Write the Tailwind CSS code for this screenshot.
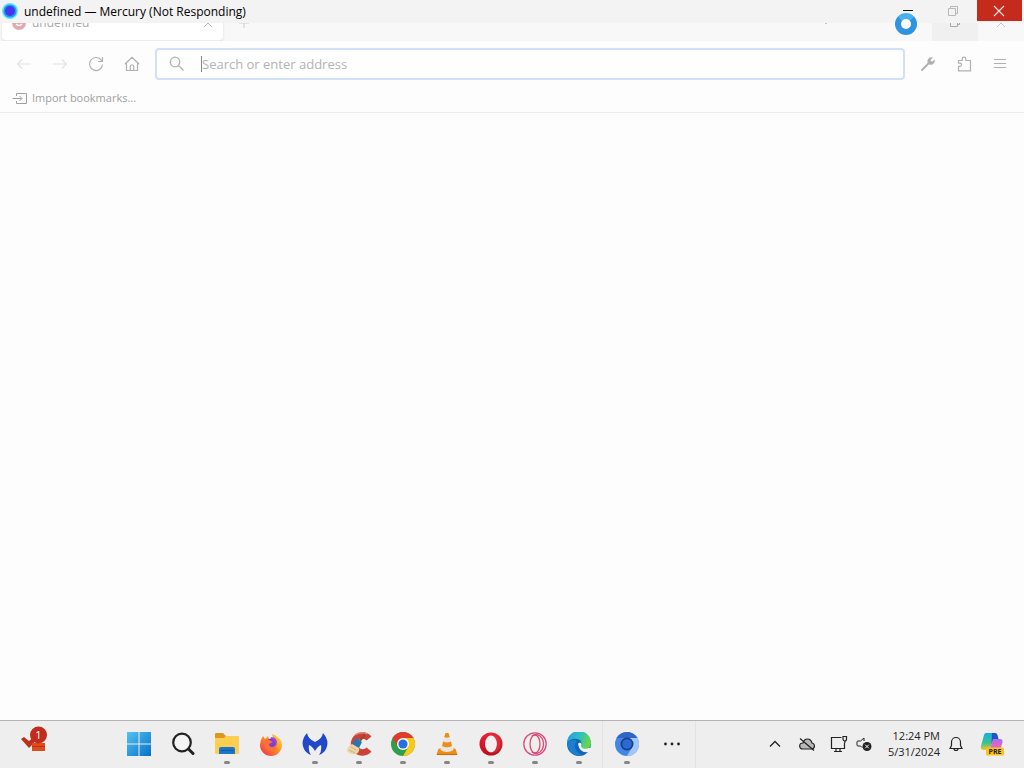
<!DOCTYPE html>
<html lang="en">
<head>
    <meta charset="UTF-8">
    <meta name="viewport" content="width=device-width, initial-scale=1.0">
    <title>undefined — Mercury (Not Responding)</title>
    <script src="https://cdn.jsdelivr.net/npm/@tailwindcss/browser@4"></script>
</head>
<body class="relative flex h-screen flex-col overflow-hidden bg-[#fdfdfd] font-['Open_Sans','Noto_Sans',sans-serif] text-xs text-black">

    <!-- Title bar -->
    <header class="flex h-[23px] shrink-0 items-start justify-between bg-[#f3f3f3]">
        <div class="flex h-[23px] items-center gap-1 pl-0.5">
            <svg class="h-[18px] w-[18px]" viewBox="0 0 18 18">
                <circle cx="8" cy="8" r="8" fill="#5fe8ee" />
                <circle cx="8" cy="8" r="6.6" fill="#1d9df2" />
                <circle cx="8" cy="8" r="5" fill="#4a35ee" />
            </svg>
            <h1 class="text-xs">undefined — Mercury (Not Responding)</h1>
        </div>
        <div class="flex pr-0.5">
            <button aria-label="Minimize" class="flex h-[21px] w-[45px] items-center justify-center pr-1">
                <svg class="h-3 w-3" viewBox="0 0 12 12"><path d="M1 5.500h10" stroke="#111" /></svg>
            </button>
            <button aria-label="Restore" class="flex h-[21px] w-[45px] items-center justify-center pr-1">
                <svg class="h-3 w-3" viewBox="0 0 12 12" fill="none" stroke="#b8b8b8"><path d="M1.500 3.500h7v7h-7zM3.500 3.500v-2h7v7h-2" /></svg>
            </button>
            <button aria-label="Close" class="flex h-[21px] w-[45px] items-center justify-center bg-[#c42b1c] pr-0.5">
                <svg class="h-3 w-3" viewBox="0 0 12 12"><path d="M1 1l10 10M11 1L1 11" stroke="#f6dedb" stroke-width="1.200" /></svg>
            </button>
        </div>
    </header>

    <!-- Tab strip, its upper half is hidden under the title bar -->
    <div class="flex h-[18px] shrink-0 items-end justify-between overflow-hidden bg-[#f8f8f8] text-[#a8a8a8]">
        <div class="flex h-9 items-center pl-0.5">
            <div class="flex h-9 w-[221px] items-center rounded-b border-b border-[#ececec] bg-white px-2.5 shadow-sm">
                <svg class="h-4 w-4" viewBox="0 0 16 16"><circle cx="7" cy="8" r="7" fill="#e4a9ad" /><path d="M4 9q3 3 6 0" stroke="#fff" stroke-width="1.500" fill="none" /></svg>
                <span class="ml-1 grow">undefined</span>
                <button aria-label="Close tab"><svg class="h-2.5 w-2.5" viewBox="0 0 10 10"><path d="M1 1l8 8M9 1L1 9" stroke="#b8b8b8" /></svg></button>
            </div>
            <button aria-label="New tab" class="ml-4"><svg class="h-2.5 w-2.5" viewBox="0 0 10 10"><path d="M0 5h10M5 0v10" stroke="#cccccc" /></svg></button>
        </div>
        <div class="flex h-9 items-center">
            <button aria-label="List all tabs" class="mr-[102px]"><svg class="h-2 w-2" viewBox="0 0 8 8"><path d="M1 2l3 3 3-3" fill="none" stroke="#c4c4c4" /></svg></button>
            <div class="flex h-9 w-[46px] items-center justify-center bg-[#f0f0f0]">
                <svg class="h-2.5 w-2.5" viewBox="0 0 10 10" fill="none" stroke="#a8a8a8"><path d="M.5 2.500h7v6h-7zM2.500 2.500v-2h7v6h-2" /></svg>
            </div>
            <div class="flex h-9 w-[46px] items-center justify-center">
                <svg class="h-2.5 w-2.5" viewBox="0 0 10 10"><path d="M1 1l8 8M9 1L1 9" stroke="#c4c4c4" /></svg>
            </div>
        </div>
    </div>

    <!-- Navigation toolbar -->
    <nav class="flex h-[46px] shrink-0 items-center pl-4">
        <div class="flex shrink-0 items-center gap-5 text-[#b0b0b0]">
            <button aria-label="Back" class="text-[#e2e2e2]"><svg class="h-4 w-4" viewBox="0 0 16 16" fill="none" stroke="currentColor" stroke-width="1.200"><path d="M15 8H1.500M6 3.500L1.500 8 6 12.500" /></svg></button>
            <button aria-label="Forward" class="text-[#e2e2e2]"><svg class="h-4 w-4" viewBox="0 0 16 16" fill="none" stroke="currentColor" stroke-width="1.200"><path d="M1 8h13.500M10 3.500L14.500 8 10 12.500" /></svg></button>
            <button aria-label="Reload"><svg class="h-4 w-4" viewBox="0 0 16 16" fill="none" stroke="currentColor" stroke-width="1.200"><path d="M14.500 8.500A6.500 6.500 0 1 1 12.800 3.600L14.500 5.500M14.500 1v4.500H10" /></svg></button>
            <button aria-label="Home"><svg class="h-4 w-4" viewBox="0 0 16 16" fill="none" stroke="currentColor" stroke-width="1.200"><path d="M1 8L8 1.400 15 8M2.500 6.700v7.800h11V6.700M6.300 14.500V10q0-1 1-1h1.400q1 0 1 1v4.500" /></svg></button>
        </div>
        <label class="ml-[15px] flex h-8 grow items-center rounded border-2 border-[#d2dffb] bg-white pl-3">
            <svg class="h-4 w-4 shrink-0" viewBox="0 0 16 16" fill="none" stroke="#b4b4b4" stroke-width="1.300"><circle cx="6" cy="6" r="4.800" /><path d="M9.500 9.500l5 5" /></svg>
            <span class="ml-4 h-4 w-px bg-[#888888]"></span>
            <input type="text" aria-label="Address" placeholder="Search or enter address" class="min-w-0 grow bg-transparent pt-px text-[13px] outline-none placeholder:text-[#b2b2b2]">
        </label>
        <div class="flex shrink-0 items-center gap-5 pr-4 pl-[15px] text-[#b0b0b0]">
            <button aria-label="Tools"><svg class="h-4 w-4" viewBox="0 0 16 16"><path d="M2 14l7-7" stroke="currentColor" stroke-width="2" stroke-linecap="round" /><path d="M12.800 1.600A4 4 0 0 0 7.500 6.500L9.500 8.500A4 4 0 0 0 14.600 3.400L12 5.800 10.400 4.200z" fill="currentColor" /></svg></button>
            <button aria-label="Extensions"><svg class="h-4 w-4" viewBox="0 0 16 16" fill="none" stroke="currentColor" stroke-width="1.200"><path d="M2.500 10.300V14.800H14.500V4.500H9.800V3A1.800 1.800 0 0 0 6.200 3V4.500H2.500V7.200H4A1.500 1.500 0 0 1 4 10.300z" /></svg></button>
            <button aria-label="Menu"><svg class="h-4 w-4" viewBox="0 0 16 16"><path d="M2 3.500h12M2 7.500h12M2 11.500h12" stroke="currentColor" /></svg></button>
        </div>
    </nav>

    <!-- Bookmarks toolbar -->
    <div class="flex h-[26px] shrink-0 items-center border-b border-[#ebebeb] pb-0.5 pl-3">
        <button class="flex items-center gap-1 text-[11px] text-[#a0a0a0]">
            <svg class="h-4 w-4" viewBox="0 0 16 16" fill="none" stroke="currentColor"><path d="M4.500 5V2.500h10v10h-10V10M.5 7.500h9M7.500 5l2.500 2.500L7.500 10" /></svg>
            <span>Import bookmarks...</span>
        </button>
    </div>

    <main class="grow"></main>

    <!-- Taskbar -->
    <footer class="flex h-12 shrink-0 items-stretch border-t border-[#b4b4b4] bg-[#eeeeee] text-[#222]">
        <div class="flex w-[117px] shrink-0 items-start pt-1 pl-5">
            <button aria-label="Widgets, 1 notification">
                <svg class="h-7 w-7" viewBox="0 0 28 28">
                    <path d="M1 14l3-2 5 4 5-4v6l-5 5z" fill="#b8321c" />
                    <path d="M12 18h13v8H12z" fill="#e04b1c" />
                    <path d="M12 21.500h13" stroke="#b8321c" />
                    <circle cx="18.500" cy="10" r="8.500" fill="#c42b1c" />
                    <text x="18.500" y="14" text-anchor="middle" font-size="11" fill="#fff">1</text>
                </svg>
            </button>
        </div>

        <div class="flex pb-0.5">
            <button aria-label="Start" class="flex w-11 items-center justify-center">
                <svg class="h-6 w-6" viewBox="0 0 24 24">
                    <defs><linearGradient id="win" gradientUnits="userSpaceOnUse" x1="0" y1="0" x2="24" y2="24"><stop stop-color="#54c3f2" /><stop offset="1" stop-color="#0670c8" /></linearGradient></defs>
                    <path d="M0 0h11.500v11.500H0zM12.500 0H24v11.500H12.500zM0 12.500h11.500V24H0zM12.500 12.500H24V24H12.500z" fill="url(#win)" />
                </svg>
            </button>
            <button aria-label="Search" class="flex w-11 items-center justify-center">
                <svg class="h-6 w-6" viewBox="0 0 24 24" fill="none" stroke="#222"><circle cx="11" cy="10.500" r="8.800" stroke-width="2.200" fill="#f4f4f4" /><path d="M17.500 17l4.500 4.500" stroke-width="3" stroke-linecap="round" /></svg>
            </button>
            <button aria-label="File Explorer" class="relative flex w-11 items-center justify-center">
                <svg class="h-6 w-[26px]" viewBox="0 0 26 24">
                    <path d="M1 2q0-1 1-1h7l3 3h12q1 0 1 1v8H1z" fill="#d8991c" />
                    <path d="M1 6h9l2-2h12q1 0 1 1v16q0 1-1 1H2q-1 0-1-1z" fill="#fccf50" />
                    <path d="M5 22v-5q0-2 2-2h12q2 0 2 2v5z" fill="#1b75c9" /><path d="M7 18.500h12" stroke="#125ba3" />
                </svg>
                <span class="absolute bottom-0.5 h-[3px] w-1.5 rounded-full bg-[#858585]"></span>
            </button>
            <button aria-label="Firefox" class="flex w-11 items-center justify-center">
                <svg class="h-6 w-6" viewBox="0 0 24 24">
                    <defs><linearGradient id="fox" x1="1" y1="0" x2="0" y2="1"><stop stop-color="#ffe24a" /><stop offset=".45" stop-color="#ff9025" /><stop offset="1" stop-color="#ef2355" /></linearGradient></defs>
                    <path d="M4 4l2 3 3-3 1 3 4-1-1-4q4 1 6 4l2 1q2 3 2 6a11 11 0 0 1-22 0q0-5 3-9z" fill="url(#fox)" />
                    <circle cx="12" cy="12" r="5.500" fill="#7541dc" />
                    <path d="M5 8q4-2 7 1l2 1-4 2q0 3 3 3 3 0 4-3 1 6-5 7-7-1-7-11z" fill="#ff7139" />
                    <path d="M12 6q5 0 5 5" fill="none" stroke="#a543d8" stroke-width="2" />
                </svg>
            </button>
            <button aria-label="Malwarebytes" class="relative flex w-11 items-center justify-center">
                <svg class="h-6 w-[26px]" viewBox="0 0 26 24">
                    <path d="M5 1q1 6 8 9 7-3 8-9 7 8 3 16-2 4-7 6 3-4 2-10-3 1-6 6-3-5-6-6-1 6 2 10-5-2-7-6Q-2 9 5 1z" fill="#2148c8" />
                </svg>
                <span class="absolute bottom-0.5 h-[3px] w-1.5 rounded-full bg-[#858585]"></span>
            </button>
            <button aria-label="CCleaner" class="relative flex w-11 items-center justify-center">
                <svg class="h-6 w-[26px]" viewBox="0 0 26 24">
                    <path d="M23 6.500A8.500 8.500 0 1 0 23 17.500" fill="none" stroke="#cd4136" stroke-width="6.500" />
                    <path d="M9 3q6-4 12-1" fill="none" stroke="#e88577" stroke-width="1.500" />
                    <path d="M19 2l-5 7" stroke="#8e4937" stroke-width="2" />
                    <path d="M10 6l6 4-3 6-7-4z" fill="#2878ae" />
                    <path d="M6 12l7 4q1 4-3 6-6 1-9-3 1-5 5-7z" fill="#ecd4a8" /><path d="M5 15l5 3M3 18l6 3" stroke="#d4af72" />
                </svg>
                <span class="absolute bottom-0.5 h-[3px] w-1.5 rounded-full bg-[#858585]"></span>
            </button>
            <button aria-label="Chrome" class="relative flex w-11 items-center justify-center">
                <svg class="h-6 w-6" viewBox="0 0 24 24">
                    <circle cx="12" cy="12" r="12" fill="#2c9f49" />
                    <path d="M1.600 6A12 12 0 0 1 22.400 6H12L6.800 15z" fill="#df3b2e" />
                    <path d="M12 6h10.400A12 12 0 0 1 12 24l5.200-9z" fill="#fcc81c" />
                    <circle cx="12" cy="12" r="6" fill="#fff" /><circle cx="12" cy="12" r="4.600" fill="#286fe0" />
                </svg>
                <span class="absolute bottom-0.5 h-[3px] w-1.5 rounded-full bg-[#858585]"></span>
            </button>
            <button aria-label="VLC" class="relative flex w-11 items-center justify-center">
                <svg class="h-6 w-6" viewBox="0 0 24 24">
                    <path d="M4.500 16.500h15q1 0 1.300 1L22.500 23h-21l1.700-5.500q.3-1 1.300-1z" fill="#f08c14" />
                    <path d="M11 1h2q.6 0 .8.700L18.500 18q-6.500 4-13 0L10.200 1.700Q10.400 1 11 1z" fill="#e8e6e3" />
                    <path d="M10.200 1.700Q10.400 1 11 1h2q.6 0 .8.700l.9 3.300q-2.700 1.500-5.400 0zM8.200 9.500q3.800 2 7.600 0l1.200 4.500q-5 2.500-10 0z" fill="#f08c14" />
                    <path d="M2 22.500h20" stroke="#cf6706" />
                </svg>
                <span class="absolute bottom-0.5 h-[3px] w-1.5 rounded-full bg-[#858585]"></span>
            </button>
            <button aria-label="Opera" class="relative flex w-11 items-center justify-center">
                <svg class="h-6 w-6" viewBox="0 0 24 24">
                    <defs><linearGradient id="opera" x2="0" y2="1"><stop stop-color="#ee2338" /><stop offset="1" stop-color="#b80d1c" /></linearGradient></defs>
                    <circle cx="12" cy="12" r="11.500" fill="url(#opera)" /><ellipse cx="12" cy="12" rx="6" ry="8.500" fill="#f4f0f0" />
                    <path d="M12 20.500A6 8.500 0 0 0 12 3.500q5-1 8 3 3 5.500 0 11-3 4-8 3z" fill="#e23a48" opacity=".6" />
                </svg>
                <span class="absolute bottom-0.5 h-[3px] w-1.5 rounded-full bg-[#858585]"></span>
            </button>
            <button aria-label="Opera GX" class="relative flex w-11 items-center justify-center">
                <svg class="h-6 w-6" viewBox="0 0 24 24" fill="none" stroke="#dc4c79" stroke-width="1.300">
                    <circle cx="12" cy="12" r="11.200" /><ellipse cx="12" cy="12" rx="5" ry="9" /><path d="M9 4q4-3 8 0 3.500 3 3.500 8T17 20q-4 3-8 0" />
                </svg>
                <span class="absolute bottom-0.5 h-[3px] w-1.5 rounded-full bg-[#858585]"></span>
            </button>
            <button aria-label="Edge" class="relative flex w-11 items-center justify-center">
                <svg class="h-6 w-6" viewBox="0 0 24 24">
                    <defs><linearGradient id="edge" x2="1" y2=".3"><stop stop-color="#249bdf" /><stop offset=".55" stop-color="#2dbec4" /><stop offset="1" stop-color="#65d64d" /></linearGradient></defs>
                    <circle cx="12" cy="12" r="12" fill="#1265b8" />
                    <path d="M0 11A12 12 0 0 1 24 11q0 6-6 6-5 0-4-3 2-6-4-7Q4 6 0 11z" fill="url(#edge)" />
                    <path d="M0 11q5-5 10-2-4 4-1 9 2 4 7 5Q3 26 0 11z" fill="#1b7fd2" />
                    <path d="M11 12q1-2 3-1 1 2 0 3 1 4 8 2h2l-2 4q-9 2-11-8z" fill="#f0f6f6" />
                </svg>
                <span class="absolute bottom-0.5 h-[3px] w-1.5 rounded-full bg-[#858585]"></span>
            </button>
        </div>

        <div class="ml-px flex border-x border-[#e3e3e3] pb-0.5 pl-0.5">
            <button aria-label="Mercury" class="relative flex w-11 items-center justify-center">
                <svg class="h-6 w-6" viewBox="0 0 24 24">
                    <circle cx="12" cy="12" r="12" fill="#4286e8" />
                    <path d="M1.600 6A12 12 0 0 1 22.400 6H12z" fill="#2f65c8" />
                    <path d="M12 6h10.400A12 12 0 0 1 12 24l5.200-9z" fill="#a2c6fa" />
                    <circle cx="12" cy="12" r="6.500" fill="#173f88" /><circle cx="12" cy="12" r="4.800" fill="#2c69d0" />
                </svg>
                <span class="absolute bottom-0.5 h-[3px] w-1.5 rounded-full bg-[#858585]"></span>
            </button>
            <button aria-label="More apps" class="flex w-[46px] items-center justify-center">
                <svg class="h-4 w-4" viewBox="0 0 16 16" fill="#222"><circle cx="1.500" cy="8" r="1.400" /><circle cx="8" cy="8" r="1.400" /><circle cx="14.500" cy="8" r="1.400" /></svg>
            </button>
        </div>

        <!-- System tray -->
        <div class="ml-auto flex items-center pr-5 pb-0.5">
            <button aria-label="Show hidden icons" class="mr-[18px]"><svg class="h-3 w-3" viewBox="0 0 12 12"><path d="M1 8.500l5-5 5 5" fill="none" stroke="#222" stroke-width="1.300" /></svg></button>
            <button aria-label="OneDrive" class="mr-[15px]"><svg class="h-4 w-4" viewBox="0 0 16 16" fill="#b8b8b8" stroke="#222" stroke-width="1.200"><path d="M4 13q-3.300 0-3.300-3T4 7q1-4 4.500-4T13 7q2.500.5 2.500 3T13 13z" /><path d="M1 2.500l14 12" /></svg></button>
            <button aria-label="Network" class="mr-2"><svg class="h-[18px] w-[18px]" viewBox="0 0 18 18" fill="none" stroke="#222" stroke-width="1.200"><path d="M11.500 2.500H1.500v11h13V8M6 13.500v3M10 13.500v3M4 16.500h8M13 1.500h3.500v2.500q0 2-1.700 2T13 4zM14.800 6v2" /></svg></button>
            <button aria-label="Volume" class="mr-4"><svg class="h-4 w-4" viewBox="0 0 16 16" fill="none" stroke="#222"><path d="M8 5V2L4.500 5H2Q1 5 1 6v3q0 1 1 1h2.500L6 11.500" /><circle cx="11" cy="10.500" r="4.500" fill="#222" stroke="none" /><path d="M9.200 8.700l3.600 3.600M12.800 8.700l-3.600 3.600" stroke="#fff" /></svg></button>
            <div class="mr-2 text-right text-[11px] leading-4">
                <div>12:24 PM</div>
                <div>5/31/2024</div>
            </div>
            <button aria-label="Notifications" class="mr-4"><svg class="h-4 w-4" viewBox="0 0 16 16" fill="none" stroke="#222" stroke-width="1.200"><path d="M2 12.500l1.500-3V6a4.500 4.500 0 0 1 9 0v3.500l1.500 3zM6 12.500a2 2 0 0 0 4 0" /></svg></button>
            <button aria-label="Copilot preview">
                <svg class="h-6 w-6" viewBox="0 0 24 24">
                    <defs>
                        <linearGradient id="copA" x2="0" y2="1"><stop stop-color="#1ba9e8" /><stop offset=".6" stop-color="#3cc58a" /><stop offset="1" stop-color="#f5c32c" /></linearGradient>
                        <linearGradient id="copB" x2="0" y2="1"><stop stop-color="#a070f0" /><stop offset=".5" stop-color="#ec62c0" /><stop offset="1" stop-color="#f58a46" /></linearGradient>
                    </defs>
                    <path d="M6 1h9l-4 14q-1 3-4 3H4q-4 0-3-4L4 3q.5-2 2-2z" fill="url(#copA)" />
                    <path d="M12 1h3q2 0 2.500 2L18.500 7h-5l-2 5z" fill="#2353cf" />
                    <path d="M14 7h6q3 0 2.500 3L20 19q-1 3-4 3H9l3-12q.5-3 2-3z" fill="url(#copB)" />
                    <rect x="6" y="15.500" width="18" height="8" rx="1.500" fill="#fbc414" />
                    <text x="15" y="22.300" text-anchor="middle" font-size="7" font-weight="700" fill="#222">PRE</text>
                </svg>
            </button>
        </div>
    </footer>

    <!-- Busy cursor -->
    <div class="absolute top-[13px] right-[107px] h-[22px] w-[22px] rounded-full border-[6px] border-[#2f94df] border-t-[#45b3ee] bg-white"></div>
</body>
</html>
